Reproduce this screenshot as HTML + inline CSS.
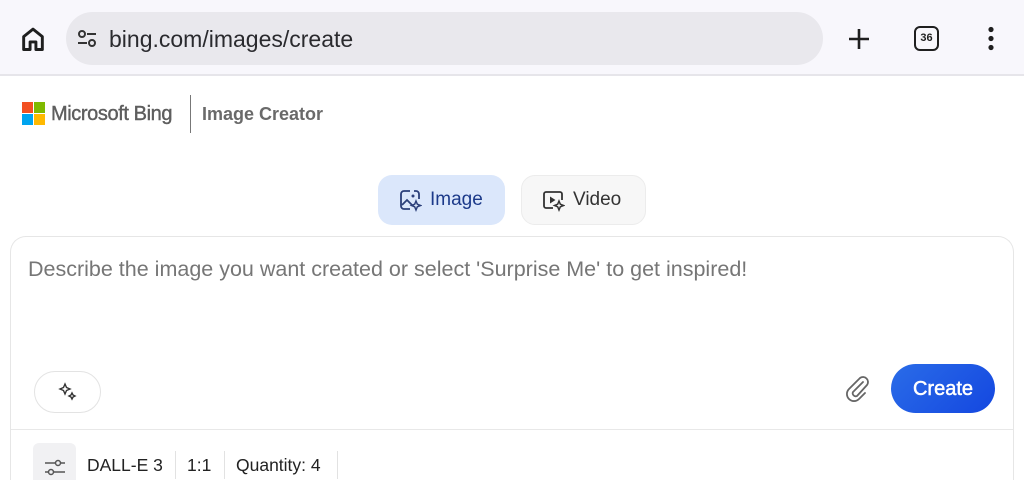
<!DOCTYPE html>
<html><head><meta charset="utf-8"><style>
*{margin:0;padding:0;box-sizing:border-box}
html{width:1024px;height:480px;overflow:hidden}
body{width:1024px;height:480px;overflow:hidden;background:#fff;font-family:"Liberation Sans",sans-serif;position:relative}
.top{position:absolute;left:0;top:0;width:1024px;height:76px;background:#f8f7fc;border-bottom:2px solid #e6e5ea}
.url{position:absolute;left:66px;top:12px;width:757px;height:53px;border-radius:27px;background:#e9e8ed}
.url span{position:absolute;left:43px;top:14px;font-size:23px;color:#2a2a2e}
.abs{position:absolute}
.pill{position:absolute;top:175px;height:50px;border-radius:14px;font-size:19px;display:flex;align-items:center}
.card{position:absolute;left:10px;top:236px;width:1004px;height:244px;border:1px solid #e6e6e6;border-bottom:none;border-radius:16px 16px 0 0;background:#fff}
</style></head><body>
<div class="top">
<svg class="abs" style="left:19px;top:25px" width="28" height="28" viewBox="0 0 24 24"><path d="M4 21V10l8-6.5 8 6.5v11h-5.5v-6.5h-5V21z" fill="none" stroke="#1f1f1f" stroke-width="2.5" stroke-linejoin="round"/></svg>
<div class="url">
<svg class="abs" style="left:10px;top:16px" width="22" height="22" viewBox="0 0 22 22"><circle cx="6" cy="6" r="3" fill="none" stroke="#333" stroke-width="2"/><path d="M11 6h9M2 15h9" stroke="#333" stroke-width="2"/><circle cx="16" cy="15" r="3" fill="none" stroke="#333" stroke-width="2"/></svg>
<span>bing.com/images/create</span></div>
<svg class="abs" style="left:847px;top:27px" width="24" height="24" viewBox="0 0 24 24"><path d="M12 2v20M2 12h20" stroke="#1f1f1f" stroke-width="2.6"/></svg>
<div class="abs" style="left:914px;top:26px;width:25px;height:25px;border:2.6px solid #1f1f1f;border-radius:6px;font-size:11px;font-weight:bold;text-align:center;line-height:20px;color:#1f1f1f">36</div>
<svg class="abs" style="left:985px;top:26px" width="12" height="26" viewBox="0 0 12 26"><circle cx="6" cy="3.5" r="2.6" fill="#1f1f1f"/><circle cx="6" cy="12.5" r="2.6" fill="#1f1f1f"/><circle cx="6" cy="21.5" r="2.6" fill="#1f1f1f"/></svg>
</div>
<div class="abs" style="left:22px;top:102px;width:11px;height:11px;background:#f25022"></div>
<div class="abs" style="left:34px;top:102px;width:11px;height:11px;background:#7fba00"></div>
<div class="abs" style="left:22px;top:114px;width:11px;height:11px;background:#00a4ef"></div>
<div class="abs" style="left:34px;top:114px;width:11px;height:11px;background:#ffb900"></div>
<div class="abs" style="left:51px;top:103px;font-size:20px;color:#5e5e5e;letter-spacing:-0.4px;-webkit-text-stroke:0.4px #5e5e5e">Microsoft Bing</div>
<div class="abs" style="left:190px;top:95px;width:1px;height:38px;background:#777"></div>
<div class="abs" style="left:202px;top:104px;font-size:18px;color:#6a6a6a;font-weight:bold">Image Creator</div>
<div class="pill" style="left:378px;width:127px;background:#dbe7fb;color:#1c3a8a">
<svg style="margin-left:20px" width="24" height="24" viewBox="0 0 24 24"><path d="M12 3H6a3 3 0 0 0-3 3v12a3 3 0 0 0 3 3h6M21 11V6a3 3 0 0 0-3-3h-2" fill="none" stroke="#2b3f7a" stroke-width="1.8"/><path d="M4 17l5-5 5 5" fill="none" stroke="#2b3f7a" stroke-width="1.8"/><circle cx="15" cy="8" r="1.5" fill="#2b3f7a"/><path d="M18 13l1.3 3.2 3.2 1.3-3.2 1.3L18 22l-1.3-3.2-3.2-1.3 3.2-1.3z" fill="none" stroke="#2b3f7a" stroke-width="1.5"/></svg>
<span style="margin-left:8px">Image</span></div>
<div class="pill" style="left:521px;width:125px;background:#f7f7f7;border:1px solid #ececec;color:#333">
<svg style="margin-left:19px" width="24" height="24" viewBox="0 0 24 24"><path d="M12 20H5a2 2 0 0 1-2-2V6a2 2 0 0 1 2-2h14a2 2 0 0 1 2 2v6" fill="none" stroke="#333" stroke-width="1.8"/><path d="M9 8.5v7l5.5-3.5z" fill="#333"/><path d="M18 13l1.3 3.2 3.2 1.3-3.2 1.3L18 22l-1.3-3.2-3.2-1.3 3.2-1.3z" fill="none" stroke="#333" stroke-width="1.5"/></svg>
<span style="margin-left:8px">Video</span></div>
<div class="card">
<div class="abs" style="left:17px;top:20px;font-size:21.5px;color:#767676">Describe the image you want created or select 'Surprise Me' to get inspired!</div>
<div class="abs" style="left:23px;top:134px;width:67px;height:42px;border:1px solid #e3e3e3;border-radius:21px">
<svg class="abs" style="left:23px;top:10px" width="20" height="20" viewBox="0 0 20 20"><path d="M7 2l1.5 3.5L12 7 8.5 8.5 7 12 5.5 8.5 2 7l3.5-1.5z" fill="none" stroke="#333" stroke-width="1.4"/><path d="M14 11l1 2 2 1-2 1-1 2-1-2-2-1 2-1z" fill="none" stroke="#333" stroke-width="1.4"/></svg></div>
<svg class="abs" style="left:832px;top:136px" width="30" height="30" viewBox="0 0 30 30"><path d="M20 9L10 19a3 3 0 0 0 4 4l10-11a5 5 0 0 0-7-7L6 16a7 7 0 0 0 10 10l6-6" fill="none" stroke="#666" stroke-width="1.8" stroke-linecap="round"/></svg>
<div class="abs" style="left:880px;top:127px;width:104px;height:49px;border-radius:25px;background:linear-gradient(135deg,#2a6ce8,#1447e0);color:#fff;font-size:20px;text-align:center;line-height:50px;-webkit-text-stroke:0.5px #fff">Create</div>
<div class="abs" style="left:0;top:192px;width:1002px;height:1px;background:#e8e8e8"></div>
<div class="abs" style="left:22px;top:206px;width:43px;height:37px;background:#f1f1f3;border-radius:6px 6px 0 0">
<svg class="abs" style="left:11px;top:15px" width="22" height="20" viewBox="0 0 22 20"><path d="M1 5h20M1 14h20" stroke="#555" stroke-width="1.5"/><circle cx="14" cy="5" r="2.5" fill="#f1f1f3" stroke="#555" stroke-width="1.5"/><circle cx="7" cy="14" r="2.5" fill="#f1f1f3" stroke="#555" stroke-width="1.5"/></svg></div>
<div class="abs" style="left:76px;top:218px;font-size:17.5px;color:#222">DALL-E 3</div>
<div class="abs" style="left:164px;top:214px;width:1px;height:28px;background:#e2e2e2"></div>
<div class="abs" style="left:176px;top:218px;font-size:17.5px;color:#222">1:1</div>
<div class="abs" style="left:213px;top:214px;width:1px;height:28px;background:#e2e2e2"></div>
<div class="abs" style="left:225px;top:218px;font-size:17.5px;color:#222">Quantity: 4</div>
<div class="abs" style="left:326px;top:214px;width:1px;height:28px;background:#e2e2e2"></div>
</div>
</body></html>
